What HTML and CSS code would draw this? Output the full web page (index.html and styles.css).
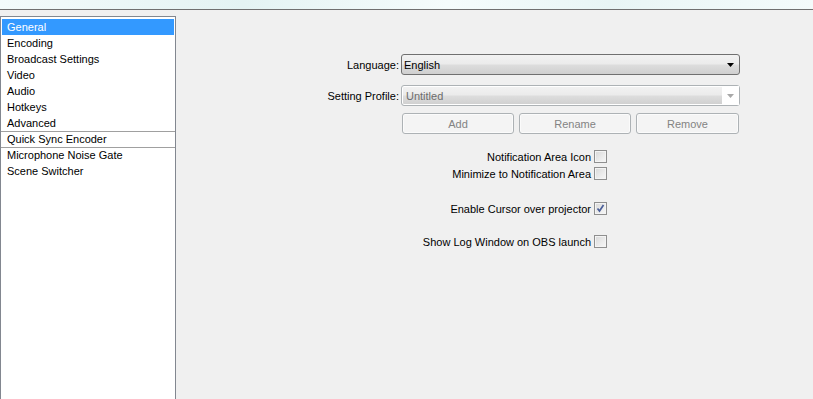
FILE: index.html
```html
<!DOCTYPE html>
<html lang="en">
<head>
    <meta charset="UTF-8">
    <title>Settings</title>
    <link rel="stylesheet" href="styles.css">
</head>
<body>
    <div class="titlebar"></div>

    <div class="window">
        <ul class="nav">
            <li class="selected">General</li>
            <li>Encoding</li>
            <li>Broadcast Settings</li>
            <li>Video</li>
            <li>Audio</li>
            <li>Hotkeys</li>
            <li>Advanced</li>
            <li class="sep">Quick Sync Encoder</li>
            <li class="sep">Microphone Noise Gate</li>
            <li>Scene Switcher</li>
        </ul>

        <div class="panel">
            <div class="form">
                <label class="field-label row-lang">Language:</label>
                <div class="combo row-lang">
                    <span>English</span>
                    <svg class="arrow" width="7" height="4" viewBox="0 0 7 4"><polygon points="0,0 7,0 3.5,4" fill="#000"/></svg>
                </div>

                <label class="field-label row-profile">Setting Profile:</label>
                <div class="combo disabled row-profile">
                    <span>Untitled</span>
                    <div class="arrow-box">
                        <svg width="7" height="4" viewBox="0 0 7 4"><polygon points="0,0 7,0 3.5,4" fill="#a8a8a8"/></svg>
                    </div>
                </div>

                <div class="buttons">
                    <button class="btn btn-wide" disabled>Add</button>
                    <button class="btn btn-wide" disabled>Rename</button>
                    <button class="btn btn-narrow" disabled>Remove</button>
                </div>
            </div>

            <div class="checks">
                <div class="check-row">
                    <span>Notification Area Icon</span>
                    <span class="box"></span>
                </div>
                <div class="check-row">
                    <span>Minimize to Notification Area</span>
                    <span class="box"></span>
                </div>
                <div class="check-row gap-large">
                    <span>Enable Cursor over projector</span>
                    <span class="box">
                        <svg width="11" height="11" viewBox="0 0 11 11"><path d="M2.5 5.5 L4.5 8 L8.5 2" fill="none" stroke="#4b5f99" stroke-width="1.7"/></svg>
                    </span>
                </div>
                <div class="check-row gap-medium">
                    <span>Show Log Window on OBS launch</span>
                    <span class="box"></span>
                </div>
            </div>
        </div>
    </div>
</body>
</html>
```

FILE: styles.css
```css
html, body {
    height: 100%;
}

body {
    margin: 0;
    background-color: #f0f0f0;
    font-family: "Liberation Sans", Arial, sans-serif;
    font-size: 11px;
    color: #000;
    overflow: hidden;
}

.titlebar {
    height: 9px;
    background: linear-gradient(90deg, #f3fbfb 0%, #e4f3f3 30%, #f5fcfc 55%, #e8f5f5 75%, #f4fbfb 100%);
    border-bottom: 1px solid #707070;
}

.window {
    display: flex;
    box-sizing: border-box;
    padding-top: 6px;
    height: calc(100% - 10px);
}

/* left list */
.nav {
    list-style: none;
    margin: 0;
    padding: 2px 1px 0 1px;
    width: 172px;
    background-color: #fff;
    border: 1px solid #828790;
    border-bottom: none;
}

.nav li {
    height: 16px;
    line-height: 16px;
    padding-left: 5px;
    white-space: nowrap;
}

.nav li.selected {
    background-color: #3399ff;
    color: #fff;
}

.nav li.sep {
    box-sizing: border-box;
    border-top: 1px solid #a0a0a0;
    line-height: 15px;
    margin: 0 -1px;
    padding-left: 6px;
}

/* right side */
.panel {
    flex: 1;
    padding-top: 38px;
}

.form {
    display: grid;
    grid-template-columns: 120px 339px;
    column-gap: 2px;
    align-items: center;
    margin-left: 103px;
}

.field-label {
    text-align: right;
    white-space: nowrap;
}

.row-profile {
    margin-top: 10px;
}

.combo {
    box-sizing: border-box;
    height: 21px;
    display: flex;
    align-items: center;
    justify-content: space-between;
    padding: 0 4px 0 2px;
    border: 1px solid #707070;
    border-radius: 3px;
    background: linear-gradient(#f2f2f2 0%, #ebebeb 48%, #dddddd 52%, #cfcfcf 100%);
}

.combo .arrow {
    margin-right: 1px;
}

.combo.disabled {
    padding: 0 0 0 4px;
    border-color: #adb2b5;
    background-color: #f0f0f0;
    box-shadow: inset 0 0 0 1px #fff;
    color: #6d6d6d;
}

.arrow-box {
    width: 17px;
    height: 19px;
    background-color: #fff;
    display: flex;
    align-items: center;
    justify-content: center;
}

.buttons {
    grid-column: 2;
    display: flex;
    gap: 5px;
    margin-top: 7px;
    margin-left: 1px;
}

.btn {
    box-sizing: border-box;
    height: 21px;
    padding: 0;
    border: 1px solid #adb2b5;
    border-radius: 3px;
    background-color: #f4f4f4;
    box-shadow: inset 0 0 0 1px #fbfbfb;
    font-family: inherit;
    font-size: 11px;
    color: #838383;
}

.btn-wide {
    width: 112px;
}

.btn-narrow {
    width: 103px;
}

.checks {
    margin-left: 103px;
    width: 328px;
    margin-top: 14px;
}

.check-row {
    display: flex;
    justify-content: flex-end;
    align-items: center;
    gap: 3px;
    height: 17px;
    white-space: nowrap;
}

.check-row.gap-large {
    margin-top: 18px;
}

.check-row.gap-medium {
    margin-top: 16px;
}

.box {
    box-sizing: border-box;
    width: 13px;
    height: 13px;
    border: 1px solid #8f8f8f;
    background: linear-gradient(135deg, #d8d8d8 0%, #ececec 60%, #f7f7f7 100%);
    box-shadow: inset 0 0 0 1px #f4f4f4;
    display: flex;
    align-items: center;
    justify-content: center;
}
```
